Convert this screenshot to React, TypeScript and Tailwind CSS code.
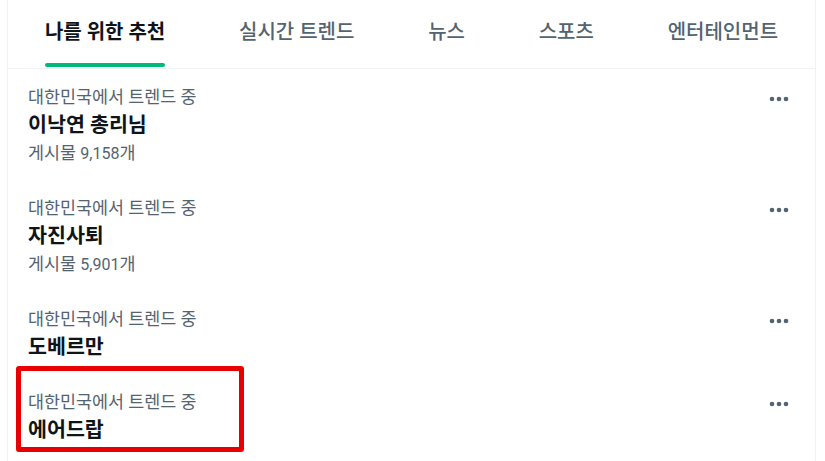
import React from "react";

const tabs = ["나를 위한 추천", "실시간 트렌드", "뉴스", "스포츠", "엔터테인먼트"];

const trends = [
  { title: "이낙연 총리님", count: "9,158" },
  { title: "자진사퇴", count: "5,901" },
  { title: "도베르만" },
  { title: "에어드랍", boxed: true },
];

function Dots() {
  return (
    <svg width="22" height="8" viewBox="0 0 22 8">
      <circle cx="4" cy="4" r="2.3" fill="#536471" />
      <circle cx="11" cy="4" r="2.3" fill="#536471" />
      <circle cx="18" cy="4" r="2.3" fill="#536471" />
    </svg>
  );
}

export default function App() {
  return (
    <div
      className="w-[825px] h-[461px] overflow-hidden bg-white"
      style={{ fontFamily: 'Roboto, "Noto Sans CJK KR", sans-serif' }}
    >
      <div className="ml-[7px] w-[809px] h-full border-x border-[#eff3f4]">
        <div className="flex h-[69px] border-b border-[#eff3f4]">
          {tabs.map((t, i) => (
            <div key={t} className="grow flex flex-col items-center">
              <div className="relative h-full flex items-center pb-[5px]">
                <span
                  className={
                    i === 0
                      ? "text-[20px] font-bold text-[#0f1419]"
                      : "text-[20px] font-medium text-[#536471]"
                  }
                >
                  {t}
                </span>
                {i === 0 && (
                  <div className="absolute left-0 right-0 bottom-[1px] h-[4px] rounded-full bg-[#00ba7c]" />
                )}
              </div>
            </div>
          ))}
        </div>
        {trends.map((tr) => (
          <div key={tr.title} className="relative flex justify-between pl-[20px] pr-[25px] pt-[14px] pb-[13px]">
            <div className="flex flex-col">
              <div className="h-[28px] leading-[28px] text-[17.4px] text-[#536471]">
                대한민국에서 트렌드 중
              </div>
              <div className="h-[28px] leading-[28px] text-[20.6px] font-bold text-[#0f1419]">
                {tr.title}
              </div>
              {tr.count && (
                <div className="h-[28px] leading-[28px] text-[17.4px] text-[#536471]">
                  게시물 <span className="text-[16px]">{tr.count}</span>개
                </div>
              )}
            </div>
            <div className="pt-[12px]">
              <Dots />
            </div>
            {tr.boxed && (
              <div className="absolute left-[8px] top-[-8px] w-[228px] h-[86px] border-[5px] border-[#e80000] rounded-[3px]" />
            )}
          </div>
        ))}
      </div>
    </div>
  );
}
